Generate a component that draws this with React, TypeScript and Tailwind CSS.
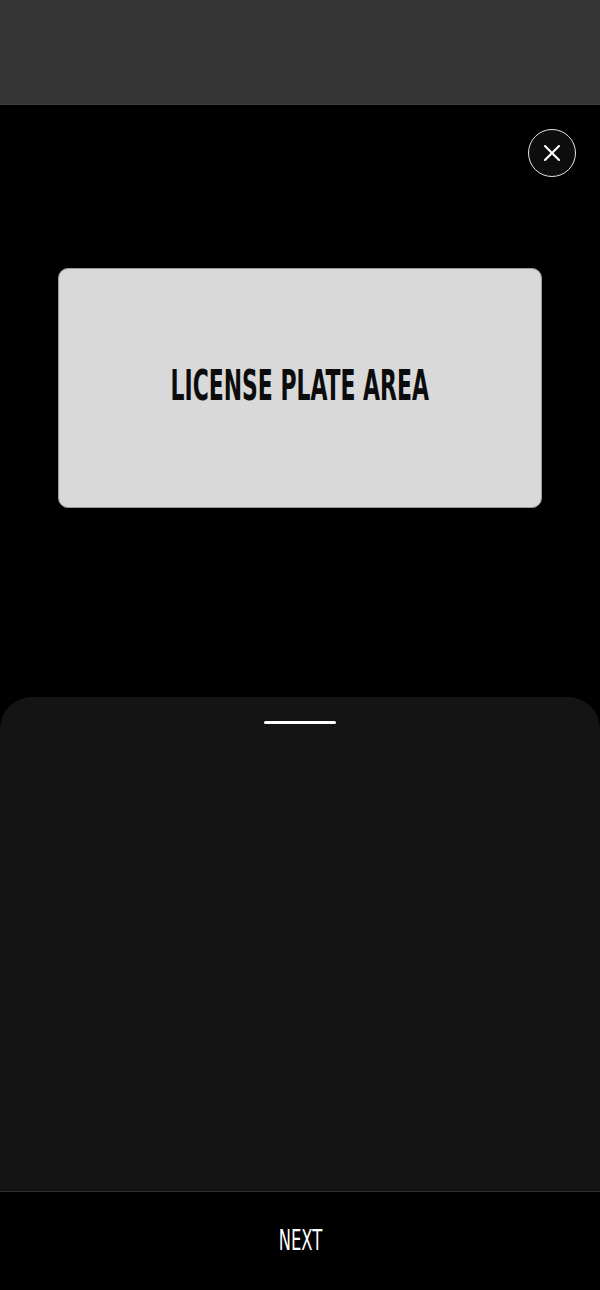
import {X} from 'lucide-react';

const condensed = {fontFamily: '"Liberation Sans Narrow", "DejaVu Sans Condensed", "Liberation Sans", sans-serif'};

export default function App() {
  return (
    <div className="flex h-[1290px] w-[600px] flex-col bg-black text-white">
      <header className="h-[105px] shrink-0 border-b border-[#3f3f3f] bg-[#343434]" />

      <main className="relative h-[592px] shrink-0">
        <button
          type="button"
          aria-label="Close"
          className="absolute right-6 top-6 flex h-12 w-12 items-center justify-center rounded-full border-[1.5px] border-[#e6e6e6] bg-[#0d0d0d]"
        >
          <X className="h-[28px] w-[28px] text-white" strokeWidth={1.8} />
        </button>

        <div className="mx-[58px] mt-[163px] flex h-[240px] items-center justify-center rounded-[10px] border border-[#9a9a9a] bg-[#d9d9d9]">
          <span
            style={condensed}
            className="-mt-1 inline-block origin-center scale-x-[0.58] whitespace-nowrap text-[42px] font-bold leading-none text-[#0c0c0c]"
          >
            LICENSE PLATE AREA
          </span>
        </div>
      </main>

      <section className="flex flex-1 flex-col items-center rounded-t-[32px] bg-[#141414] pt-6">
        <div className="h-[3px] w-[72px] rounded-full bg-white" />
      </section>

      <footer className="flex h-[99px] shrink-0 items-center justify-center border-t border-[#2e2e2e] bg-black">
        <span
          style={condensed}
          className="inline-block scale-x-[0.65] text-[28px] font-medium leading-none text-white"
        >
          NEXT
        </span>
      </footer>
    </div>
  );
}
